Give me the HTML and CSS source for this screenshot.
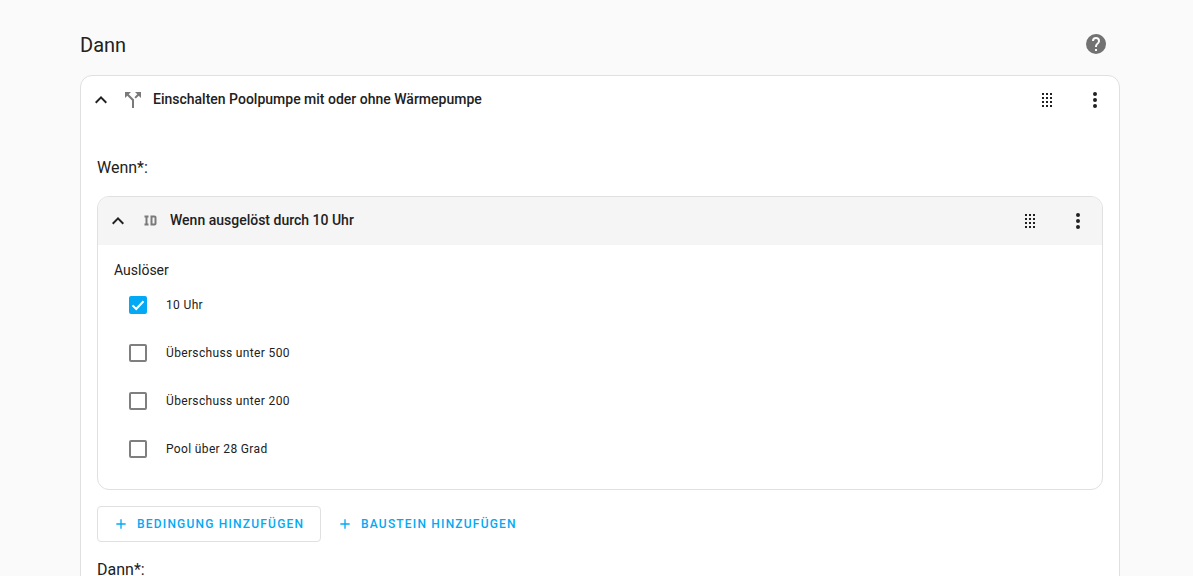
FILE: index.html
```html
<!DOCTYPE html>
<html lang="de">
<head>
<meta charset="utf-8">
<title>Dann</title>
<link rel="stylesheet" href="styles.css">
</head>
<body>
<main class="page">
  <div class="section-head">
    <h2 class="section-title">Dann</h2>
    <svg class="icon help" viewBox="0 0 24 24"><path d="M15.07,11.25L14.17,12.17C13.45,12.89 13,13.5 13,15H11V14.5C11,13.39 11.45,12.39 12.17,11.67L13.41,10.41C13.78,10.05 14,9.55 14,9C14,7.89 13.1,7 12,7A2,2 0 0,0 10,9H8A4,4 0 0,1 12,5A4,4 0 0,1 16,9C16,9.88 15.64,10.67 15.07,11.25M13,19H11V17H13M12,2A10,10 0 0,0 2,12A10,10 0 0,0 12,22A10,10 0 0,0 22,12C22,6.47 17.5,2 12,2Z"/></svg>
  </div>
  <section class="card outer">
    <header class="row-head">
      <svg class="icon chevron" viewBox="0 0 24 24"><path d="M7.41,15.41L12,10.83L16.59,15.41L18,14L12,8L6,14L7.41,15.41Z"/></svg>
      <svg class="icon kind" viewBox="0 0 24 24"><path d="M14,4L16.29,6.29L13.41,9.17L14.83,10.59L17.71,7.71L20,10V4M10,4H4V10L6.29,7.71L11,12.41V20H13V11.59L7.71,6.29"/></svg>
      <span class="row-title">Einschalten Poolpumpe mit oder ohne Wärmepumpe</span>
      <svg class="icon drag" viewBox="0 0 24 24"><path d="M7,19V17H9V19H7M11,19V17H13V19H11M15,19V17H17V19H15M7,15V13H9V15H7M11,15V13H13V15H11M15,15V13H17V15H15M7,11V9H9V11H7M11,11V9H13V11H11M15,11V9H17V11H15M7,7V5H9V7H7M11,7V5H13V7H11M15,7V5H17V7H15Z"/></svg>
      <svg class="icon dots" viewBox="0 0 24 24"><path d="M12,16A2,2 0 0,1 14,18A2,2 0 0,1 12,20A2,2 0 0,1 10,18A2,2 0 0,1 12,16M12,10A2,2 0 0,1 14,12A2,2 0 0,1 12,14A2,2 0 0,1 10,12A2,2 0 0,1 12,10M12,4A2,2 0 0,1 14,6A2,2 0 0,1 12,8A2,2 0 0,1 10,6A2,2 0 0,1 12,4Z"/></svg>
    </header>
    <div class="outer-body">
      <h3 class="group-label">Wenn*:</h3>
      <section class="card inner">
        <header class="row-head shaded">
          <svg class="icon chevron" viewBox="0 0 24 24"><path d="M7.41,15.41L12,10.83L16.59,15.41L18,14L12,8L6,14L7.41,15.41Z"/></svg>
          <svg class="icon kind id" viewBox="0 0 24 24"><path d="M10 7V9H9V15H10V17H6V15H7V9H6V7H10M16 7C17.11 7 18 7.9 18 9V15C18 16.11 17.11 17 16 17H12V7M16 9H14V15H16V9Z"/></svg>
          <span class="row-title">Wenn ausgelöst durch 10 Uhr</span>
          <svg class="icon drag" viewBox="0 0 24 24"><path d="M7,19V17H9V19H7M11,19V17H13V19H11M15,19V17H17V19H15M7,15V13H9V15H7M11,15V13H13V15H11M15,15V13H17V15H15M7,11V9H9V11H7M11,11V9H13V11H11M15,11V9H17V11H15M7,7V5H9V7H7M11,7V5H13V7H11M15,7V5H17V7H15Z"/></svg>
          <svg class="icon dots" viewBox="0 0 24 24"><path d="M12,16A2,2 0 0,1 14,18A2,2 0 0,1 12,20A2,2 0 0,1 10,18A2,2 0 0,1 12,16M12,10A2,2 0 0,1 14,12A2,2 0 0,1 12,14A2,2 0 0,1 10,12A2,2 0 0,1 12,10M12,4A2,2 0 0,1 14,6A2,2 0 0,1 12,8A2,2 0 0,1 10,6A2,2 0 0,1 12,4Z"/></svg>
        </header>
        <div class="inner-body">
          <div class="field-label">Auslöser</div>
          <ul class="checks">
            <li class="check-row">
              <span class="box checked"><svg viewBox="0 0 18 18"><path d="M3.5 9.4 7.2 13 14.5 5.2"/></svg></span>
              <span class="check-label">10 Uhr</span>
            </li>
            <li class="check-row"><span class="box"></span><span class="check-label">Überschuss unter 500</span></li>
            <li class="check-row"><span class="box"></span><span class="check-label">Überschuss unter 200</span></li>
            <li class="check-row"><span class="box"></span><span class="check-label">Pool über 28 Grad</span></li>
          </ul>
        </div>
      </section>
      <div class="actions">
        <button class="btn outlined" type="button">
          <svg class="icon plus" viewBox="0 0 24 24"><path d="M19,13H13V19H11V13H5V11H11V5H13V11H19V13Z"/></svg>Bedingung hinzufügen
        </button>
        <button class="btn" type="button">
          <svg class="icon plus" viewBox="0 0 24 24"><path d="M19,13H13V19H11V13H5V11H11V5H13V11H19V13Z"/></svg>Baustein hinzufügen
        </button>
      </div>
      <h3 class="group-label then">Dann*:</h3>
    </div>
  </section>
</main>
</body>
</html>
```
FILE: styles.css
```css
* { box-sizing: border-box; }
html, body { height: 100%; overflow: hidden; }
body {
  margin: 0;
  background: #fafafa;
  color: #212121;
  font-family: Roboto, "Liberation Sans", sans-serif;
}
.page { width: 1040px; margin-left: 80px; }
.section-head {
  height: 75px;
  padding-top: 31px;
  display: flex;
  align-items: flex-start;
  justify-content: space-between;
}
.section-title {
  margin: 0;
  font-size: 20px;
  font-weight: 400;
  line-height: 28px;
}
.icon { display: block; flex: none; width: 24px; height: 24px; fill: #212121; }
.help { fill: #727272; margin: 0 12px 0 0; position: relative; top: 1px; }
.card { background: #fff; border: 1px solid #e0e0e0; border-radius: 12px; }
.outer { height: 700px; }
.row-head {
  display: flex;
  align-items: center;
  height: 48px;
  padding-left: 8px;
}
.inner .row-head { border-radius: 11px 11px 0 0; }
.shaded { background: #f5f5f5; }
.kind { fill: #7a7a7a; margin-left: 8px; }
.id { transform: translate(0.5px, -0.5px); }
.row-title {
  flex: 1;
  margin-left: 8px;
  font-size: 14px;
  font-weight: 500;
  line-height: 20px;
  position: relative;
  top: -1px;
}
.drag { width: 24px; margin-right: 24px; }
.dots { margin-right: 12px; }
.outer-body { padding: 32px 16px 0; }
.group-label {
  margin: 0;
  font-size: 16px;
  font-weight: 400;
  line-height: 24px;
}
.inner { margin-top: 16px; height: 294px; }
.inner-body { padding-top: 15px; }
.field-label {
  margin-left: 16px;
  font-size: 14px;
  line-height: 20px;
}
.checks { list-style: none; margin: 0; padding: 1px 0 0 31px; }
.check-row { display: flex; align-items: center; height: 48px; }
.box {
  display: block;
  width: 18px;
  height: 18px;
  border: 2px solid #7f7f7f;
  border-radius: 2px;
}
.box.checked { background: #03a9f4; border-color: #03a9f4; position: relative; }
.box svg {
  position: absolute;
  left: -2px;
  top: -2px;
  width: 18px;
  height: 18px;
  fill: none;
  stroke: #fff;
  stroke-width: 2;
}
.check-label { margin-left: 19px; font-size: 12px; line-height: 16px; letter-spacing: 0.35px; }
.actions { display: flex; margin-top: 16px; }
.btn {
  display: flex;
  align-items: center;
  height: 36px;
  padding: 0 15px;
  background: none;
  border: 1px solid transparent;
  border-radius: 4px;
  color: #03a9f4;
  font-family: inherit;
  font-size: 12px;
  font-weight: 500;
  letter-spacing: 1.2px;
  text-transform: uppercase;
}
.outlined { border-color: #e0e0e0; background: #fff; width: 224px; }
.plus { width: 16px; height: 16px; fill: #03a9f4; margin-right: 8px; }
.then { margin-top: 16px; }
```
